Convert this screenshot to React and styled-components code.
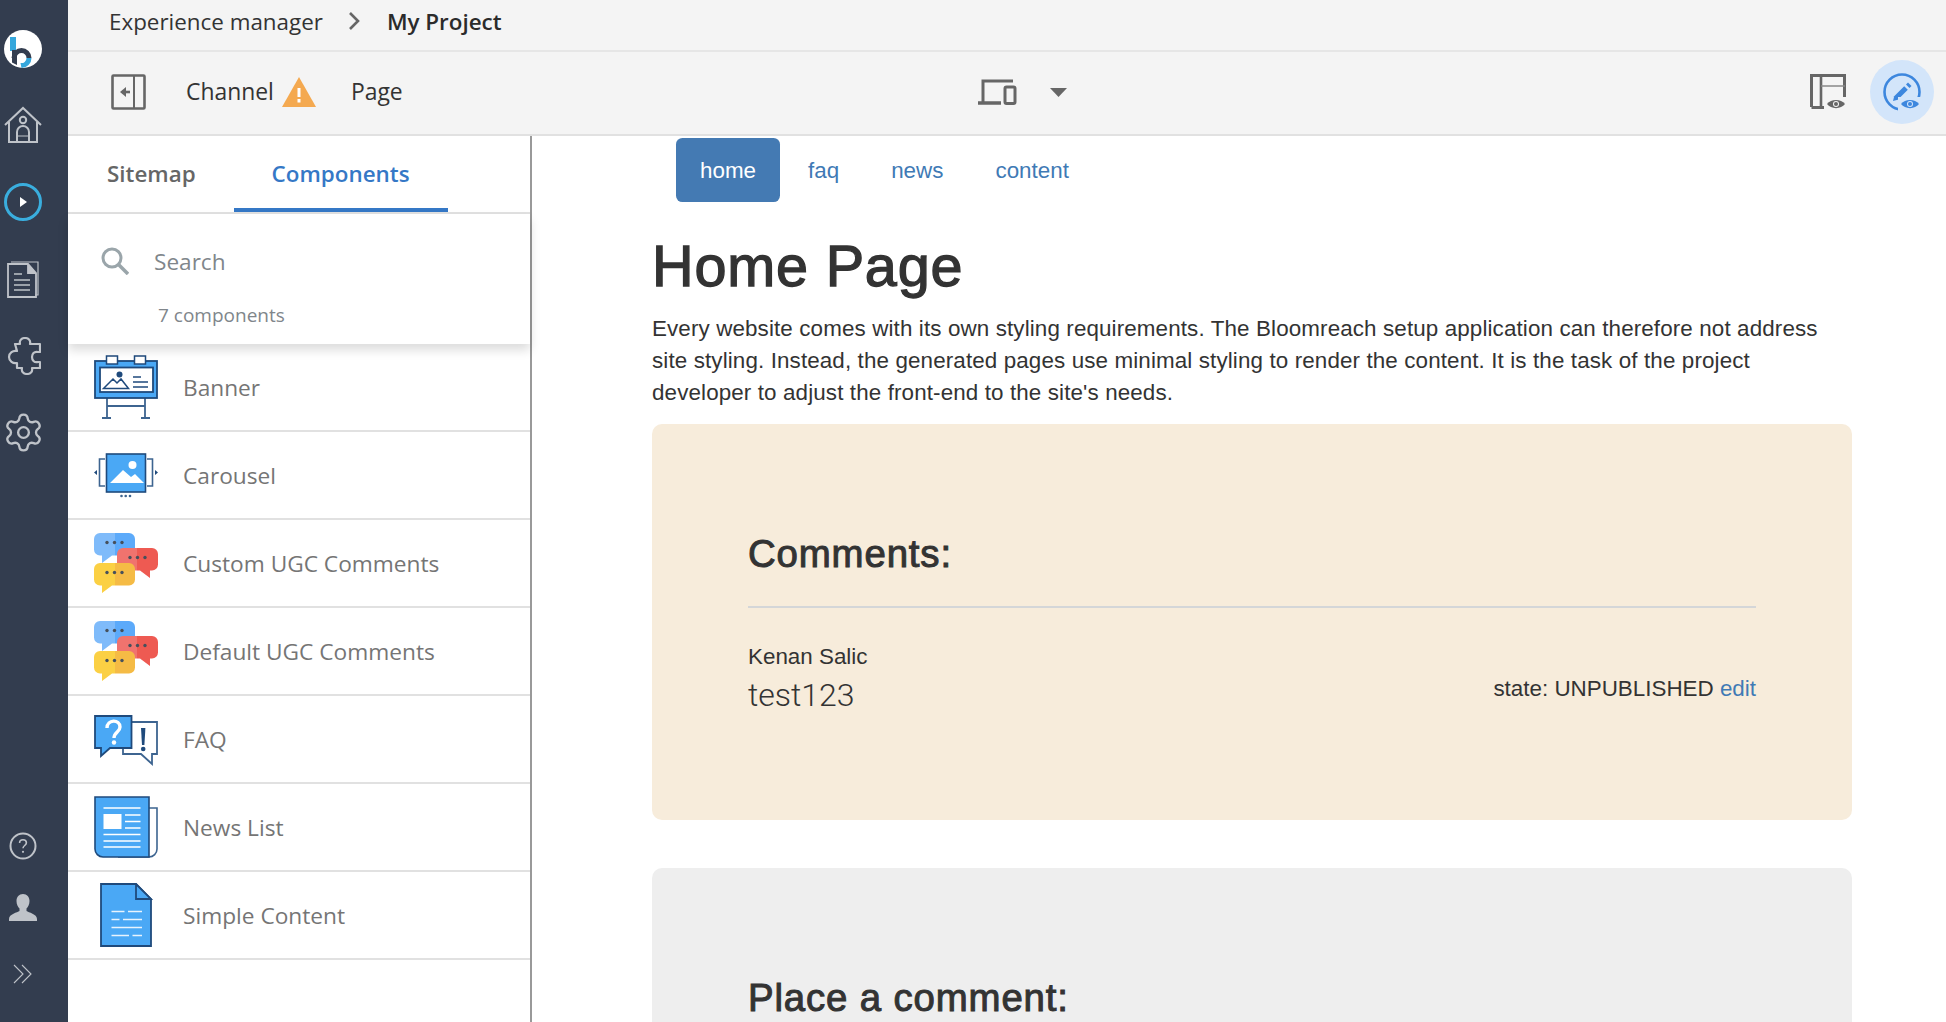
import React from 'react'
import styled, { createGlobalStyle } from 'styled-components'
import { Settings } from 'lucide-react'

const GlobalStyle = createGlobalStyle`
  html, body { margin: 0; padding: 0; height: 100%; overflow: hidden; background: #fff; }
  * { box-sizing: border-box; }
`

const Shell = styled.div`
  display: flex;
  width: 100vw;
  height: 100vh;
  overflow: hidden;
  font-family: "Open Sans", sans-serif;
`
const SideNav = styled.nav`
  flex: 0 0 68px;
  display: flex;
  flex-direction: column;
  background: #333d4f;
  padding: 30px 22px 38px 0;
`
const NavItem = styled.div`
  flex: 0 0 ${props => props.h || 77}px;
  display: flex;
  justify-content: center;
  align-items: center;
  margin-top: ${props => props.mt || 0}px;
`
const NavBottom = styled.div`
  margin-top: auto;
  display: flex;
  flex-direction: column;
`
const Main = styled.div`
  flex: 1;
  min-width: 0;
  display: flex;
  flex-direction: column;
`
const Crumbs = styled.div`
  flex: 0 0 52px;
  display: flex;
  align-items: center;
  padding: 0 0 8px 41px;
  background: #f4f4f4;
  border-bottom: 2px solid #e6e6e6;
  font-size: 22.4px;
  color: #333;
`
const CrumbSep = styled.svg`
  width: 13px;
  height: 18px;
  margin: 0 26px 0 25px;
`
const CrumbCurrent = styled.span`
  font-weight: 600;
  color: #2b2b2b;
`
const Toolbar = styled.div`
  flex: 0 0 84px;
  display: flex;
  align-items: center;
  padding: 0 12px 2px 0;
  background: #f4f4f4;
  border-bottom: 2px solid #e1e1e1;
  font-size: 22.9px;
  color: #333;
`
const ToolLeft = styled.div`
  flex: 0 0 910px;
  display: flex;
  align-items: center;
  padding-left: 43px;
`
const ChannelLabel = styled.span`
  margin: 0 8px 2px 40px;
`
const PageLabel = styled.span`
  margin: 0 0 2px 35px;
`
const ToolCenter = styled.div`
  display: flex;
  align-items: center;
  gap: 33px;
`
const ToolRight = styled.div`
  margin-left: auto;
  display: flex;
  align-items: center;
  gap: 24px;
`
const ModeButton = styled.div`
  width: 64px;
  height: 64px;
  border-radius: 50%;
  background: #d3e5fa;
  display: flex;
  align-items: center;
  justify-content: center;
`
const Body = styled.div`
  flex: 1;
  min-height: 0;
  display: flex;
`
const Panel = styled.aside`
  flex: 0 0 464px;
  display: flex;
  flex-direction: column;
  border-right: 2px solid #999;
  background: #fff;
`
const Tabs = styled.div`
  flex: 0 0 78px;
  display: flex;
  border-bottom: 2px solid #e1e1e1;
`
const Tab = styled.div`
  display: flex;
  align-items: center;
  padding: 2px 38px 0 ${props => props.active ? 38 : 39}px;
  font-size: 22.4px;
  font-weight: 600;
  color: ${props => props.active ? '#3578c6' : '#666'};
  border-bottom: 4px solid ${props => props.active ? '#3578c6' : 'transparent'};
`
const SearchBox = styled.div`
  flex: 0 0 130px;
  position: relative;
  z-index: 2;
  padding: 32px 0 0 33px;
  background: #fff;
  box-shadow: 0 6px 10px rgba(0, 0, 0, 0.14);
`
const SearchRow = styled.div`
  display: flex;
  align-items: center;
  gap: 25px;
  height: 30px;
  font-size: 22.6px;
  color: #80868b;
`
const SearchCount = styled.div`
  margin: 27px 0 0 57px;
  font-size: 19px;
  line-height: 24px;
  color: #80868b;
`
const Row = styled.div`
  flex: 0 0 88px;
  display: flex;
  align-items: center;
  gap: 25px;
  padding-left: 26px;
  border-bottom: 2px solid #e1e1e1;
  font-size: 22.7px;
  color: #757575;
`
const RowIcon = styled.svg`
  flex: 0 0 64px;
  width: 64px;
  height: 64px;
`
const Content = styled.main`
  flex: 1;
  min-width: 0;
  padding: 2px 0 0 120px;
  font-family: "Liberation Sans", Arial, sans-serif;
  font-size: 22.4px;
  line-height: 32px;
  color: #333;
`
const Inner = styled.div`
  width: 1200px;
`
const PageNav = styled.ul`
  list-style: none;
  display: flex;
  gap: 4px;
  margin: 0 0 0 24px;
  padding: 0;
`
const PageNavLink = styled.li`
  padding: 17px 24px 15px;
  border-radius: 6.4px;
  color: ${props => props.active ? '#fff' : '#3f7ab5'};
  background: ${props => props.active ? '#447ab3' : 'transparent'};
`
const Title = styled.h1`
  margin: 33px 0 15px;
  font-size: 57.6px;
  line-height: 63px;
  font-weight: 400;
  -webkit-text-stroke: 1.3px #333;
  letter-spacing: 0.8px;
`
const Intro = styled.p`
  margin: 0 0 15px;
  letter-spacing: 0.12px;
`
const Card = styled.section`
  min-height: ${props => props.h || 396}px;
  margin-bottom: 48px;
  padding: 109px 96px 0;
  border-radius: 10px;
  background: ${props => props.tone || '#eee'};
`
const CardTitle = styled.h3`
  margin: 0;
  font-size: 38.4px;
  line-height: 42px;
  font-weight: 400;
  -webkit-text-stroke: 1px #333;
  letter-spacing: 0.85px;
`
const Rule = styled.hr`
  margin: 31px 0 33px;
  border: 0;
  border-top: 2px solid #d4d6d8;
`
const Comment = styled.div`
  display: flex;
  justify-content: space-between;
  align-items: flex-end;
`
const CommentText = styled.div`
  font-family: Roboto, "Liberation Sans", sans-serif;
  font-weight: 300;
  font-size: 32px;
  line-height: 44px;
`
const CommentState = styled.div`
  padding-bottom: 12px;
`
const EditLink = styled.span`
  color: #3f7ab5;
`

const ic = '#bfc3c9'

const Logo = () => (
  <svg width="38" height="38" viewBox="0 0 38 38">
    <circle cx="19" cy="19" r="19" fill="#fff" />
    <path d="M6 7h6v14H6z" fill="#35a7dc" />
    <path d="M8 20h5v15l-5-2.500z" fill="#333d4f" />
    <path d="M7.500 28a10 10 0 0 1 20 0h-5a5 5 0 0 0-10 0z" fill="#333d4f" />
    <path d="M27.500 28a10 10 0 0 1-10 10l-1-5a5 5 0 0 0 6-5z" fill="#35a7dc" />
  </svg>
)
const HomeIcon = () => (
  <svg width="38" height="38" viewBox="0 0 38 38" fill="none" stroke={ic} strokeWidth="2">
    <path d="M1 19 19 2l18 17" />
    <path d="M5 16v20h28V16" />
    <circle cx="19" cy="14" r="3.200" />
    <path d="M13 36V26a6 6 0 0 1 12 0v10" />
    <path d="M13 30h12" strokeWidth="1" />
  </svg>
)
const PlayIcon = () => (
  <svg width="38" height="40" viewBox="0 0 38 40" fill="none">
    <circle cx="19" cy="20" r="17.500" stroke="#3aaede" strokeWidth="3" />
    <path d="M16 15v10l7-5z" fill="#fff" />
  </svg>
)
const DocsIcon = () => (
  <svg width="32" height="38" viewBox="0 0 32 38" fill="none" stroke={ic} strokeWidth="1.800">
    <path d="M4 2h27v33h-3" strokeWidth="1.200" />
    <path d="M1 4h20l8 9v24H1z" />
    <path d="M21 4v9h8" fill={ic} />
    <path d="M7 14h8M7 20h16M7 25h16M7 30h16" strokeWidth="1.400" />
  </svg>
)
const PuzzleIcon = () => (
  <svg width="36" height="38" viewBox="0 0 36 38" fill="none" stroke={ic} strokeWidth="2.200" strokeLinejoin="round">
    <path d="M10 7h5c-1-4 2-6 5-6s6 2 5 6h10v8h-2c-4-1-6 2-6 5s2 6 6 5h2v6h-8c1 4-2 6-5 6s-6-2-5-6h-5v-5c-4 1-8-2-8-6s4-7 8-6z" />
  </svg>
)
const HelpIcon = () => (
  <svg width="28" height="28" viewBox="0 0 28 28" fill="none">
    <circle cx="14" cy="14" r="12.500" stroke={ic} strokeWidth="2" />
    <path d="M10.600 11c0-2 1.500-3.200 3.400-3.200s3.400 1.200 3.400 3c0 2.600-3.400 2.800-3.400 5.400" stroke={ic} strokeWidth="1.600" />
    <circle cx="14" cy="19.800" r="1.100" fill={ic} />
  </svg>
)
const UserIcon = () => (
  <svg width="28" height="28" viewBox="0 0 28 28" fill={ic}>
    <path d="M14 1c4 0 6.500 3 6.500 7 0 3.500-1.500 6-3 7.500v2.500c2 1.500 10.500 3 10.500 8v2H0v-2c0-5 8.500-6.500 10.500-8v-2.500c-1.500-1.500-3-4-3-7.500 0-4 2.500-7 6.500-7z" />
  </svg>
)
const ExpandIcon = () => (
  <svg width="20" height="20" viewBox="0 0 20 20" fill="none" stroke={ic} strokeWidth="1.100">
    <path d="m1 1 9 9-9 9M9 1l9 9-9 9" />
  </svg>
)

const CollapseIcon = () => (
  <svg width="35" height="36" viewBox="0 0 35 36" fill="none">
    <rect x="1.500" y="1.500" width="32" height="33" rx="1" stroke="#666" strokeWidth="2.600" />
    <path d="M23 2v32" stroke="#666" strokeWidth="2" />
    <path d="M19 18h-8" stroke="#666" strokeWidth="2.600" />
    <path d="M15 13v10l-6-5z" fill="#666" />
  </svg>
)
const WarnIcon = () => (
  <svg width="34" height="30" viewBox="0 0 34 30">
    <path d="M17 0 34 30H0z" fill="#f4a950" />
    <path d="M15.500 11h3v9h-3zM15.500 22h3v3.500h-3z" fill="#fff" />
  </svg>
)
const DeviceIcon = () => (
  <svg width="39" height="26" viewBox="0 0 39 26" fill="none" stroke="#666">
    <path d="M5 23V2h30" strokeWidth="3" />
    <path d="M0 24h23" strokeWidth="3.500" />
    <rect x="27" y="8" width="10" height="16.500" rx="1.500" strokeWidth="3" />
  </svg>
)
const Caret = () => (
  <svg width="17" height="9" viewBox="0 0 17 9">
    <path d="M0 0h17l-8.500 9z" fill="#666" />
  </svg>
)
const EyeShape = ({ x, y, color, bg }) => (
  <g transform={`translate(${x} ${y})`}>
    <path d="M-3 -3h24v14H-3z" fill={bg} />
    <path d="M0 4c4-5.500 14-5.500 18 0-4 5.500-14 5.500-18 0z" fill={color} />
    <circle cx="9" cy="4" r="3" fill={bg} />
    <circle cx="9" cy="4" r="2" fill={color} />
  </g>
)
const LayoutEyeIcon = () => (
  <svg width="36" height="36" viewBox="0 0 36 36" fill="none">
    <path d="M1.500 33V1.500h33V24" stroke="#666" strokeWidth="3" />
    <path d="M1.500 33.500h13" stroke="#666" strokeWidth="3" />
    <path d="M11 2v31" stroke="#666" strokeWidth="2.600" />
    <path d="M11 12h24" stroke="#888" strokeWidth="1.500" />
    <EyeShape x={17} y={26} color="#666" bg="#f4f4f4" />
  </svg>
)
const EditEyeIcon = () => (
  <svg width="38" height="38" viewBox="0 0 38 38" fill="none">
    <circle cx="19" cy="19" r="17.500" stroke="#3d87de" strokeWidth="2.600" />
    <path d="M10 28l1.200-4.800 10-10 3.600 3.600-10 10z" fill="#3d87de" />
    <path d="m23 11.500 2-2 3.500 3.500-2 2z" fill="#3d87de" />
    <EyeShape x={18} y={27} color="#3d87de" bg="#d3e5fa" />
  </svg>
)
const SearchIcon = () => (
  <svg width="28" height="28" viewBox="0 0 28 28" fill="none" stroke="#9aa5aa">
    <circle cx="11" cy="11" r="9" strokeWidth="3" />
    <path d="m17.500 17.500 9.500 9.500" strokeWidth="3.500" />
  </svg>
)

const line = '#1f4a7c'
const fillBlue = '#4aa8f5'

const BannerArt = () => (
  <RowIcon viewBox="0 0 64 64" fill="none">
    <path d="M13 43v19M51 43v19M13 51h38M8 63h9M47 63h9" stroke="#3d6490" strokeWidth="1.800" />
    <rect x="1" y="6" width="62" height="37" fill={fillBlue} stroke={line} strokeWidth="1.800" />
    <rect x="6" y="12.500" width="53" height="24.500" fill="#fff" stroke={line} strokeWidth="1.800" />
    <rect x="12.500" y="1" width="11" height="8" fill="#fff" stroke={line} strokeWidth="1.500" />
    <rect x="40.500" y="1" width="11" height="8" fill="#fff" stroke={line} strokeWidth="1.500" />
    <circle cx="25.500" cy="19.500" r="3" fill={line} />
    <path d="M9.500 33.500 19 24l4 4 4-4 7.500 9.500zM11 33.500h22" stroke={line} strokeWidth="1.500" />
    <path d="M39 22h8M39 27h15M39 32h15" stroke={line} strokeWidth="1.500" />
  </RowIcon>
)
const CarouselArt = () => (
  <RowIcon viewBox="0 0 64 64" fill="none">
    <path d="M11 16H5.500v27H11M53 16h5.500v27H53" stroke="#3d6490" strokeWidth="1.600" />
    <rect x="12.500" y="11" width="39" height="38" fill={fillBlue} stroke={line} strokeWidth="1.600" />
    <circle cx="38.500" cy="22" r="4" fill="#fff" />
    <path d="M16 40 29 27l8 7 4-3 9 9z" fill="#fff" />
    <path d="M3 27v5l-3-2.500zM61 27v5l3-2.500z" fill={line} />
    <circle cx="27.500" cy="53" r="1.300" fill="#3d6490" />
    <circle cx="31.700" cy="53" r="1.300" fill="#3d6490" />
    <circle cx="36" cy="53" r="1.300" fill="#3d6490" />
  </RowIcon>
)
const Bubble = ({ x, y, tail, left, right, clip }) => (
  <g transform={`translate(${x} ${y})`}>
    <clipPath id={clip}>
      <path d={`M6 0h29a6 6 0 0 1 6 6v10.500a6 6 0 0 1-6 6H${tail + 10}L${tail} 30v-7.500H6a6 6 0 0 1-6-6V6a6 6 0 0 1 6-6z`} />
    </clipPath>
    <g clipPath={`url(#${clip})`}>
      <rect width="21" height="32" fill={left} />
      <rect x="21" width="21" height="32" fill={right} />
    </g>
    <circle cx="13" cy="9.500" r="1.700" fill="#46505c" />
    <circle cx="20.500" cy="9.500" r="1.700" fill="#46505c" />
    <circle cx="28" cy="9.500" r="1.700" fill="#46505c" />
  </g>
)
const ChatArt = ({ id }) => (
  <RowIcon viewBox="0 0 64 64" fill="none">
    <Bubble x={0} y={2} tail={8} left="#7fbbfa" right="#5caafa" clip={`${id}a`} />
    <g transform="translate(64 17) scale(-1 1)">
      <Bubble x={0} y={0} tail={8} left="#ee5a52" right="#f0736e" clip={`${id}b`} />
    </g>
    <Bubble x={0} y={32} tail={8} left="#fbd044" right="#f5bb45" clip={`${id}c`} />
  </RowIcon>
)
const FaqArt = () => (
  <RowIcon viewBox="0 0 64 64" fill="none">
    <path d="M38 15h25v32h-5v10l-11-10H29v-6" fill="#fff" stroke="#3d6490" strokeWidth="1.800" />
    <path d="M1 9h36.500v32H16L7 49v-8H1z" fill={fillBlue} stroke={line} strokeWidth="1.800" />
    <path d="M13 21c0-9 13-9 13-1 0 5-6 5-6 11" stroke="#fff" strokeWidth="3.400" />
    <circle cx="20" cy="35.500" r="2.200" fill="#fff" />
    <path d="M47 21h4.400l-1 17h-2.400z" fill={line} />
    <circle cx="49.200" cy="42" r="2.300" fill={line} />
  </RowIcon>
)
const NewsArt = () => (
  <RowIcon viewBox="0 0 64 64" fill="none">
    <path d="M55 13h8v41a8 8 0 0 1-8 8H24" stroke="#3d6490" strokeWidth="1.600" fill="#fff" />
    <path d="M1 2h54v60H9a8 8 0 0 1-8-8z" fill={fillBlue} stroke={line} strokeWidth="1.600" />
    <rect x="9.500" y="19" width="18" height="15" fill="#fff" />
    <path d="M9.500 13h37M31 20h15.500M31 26.500h15.500M31 33h15.500M9.500 39.500h37M9.500 46h37M9.500 52h37" stroke="#fff" strokeWidth="1.600" />
  </RowIcon>
)
const ContentArt = () => (
  <RowIcon viewBox="0 0 64 64" fill="none">
    <path d="M7 1h35l15 15v47H7z" fill={fillBlue} stroke={line} strokeWidth="1.800" />
    <path d="M42 1v15h15z" fill={fillBlue} stroke={line} strokeWidth="1.800" />
    <path d="M17.500 28.500h13M34 28.500h14M17.500 36.500h8M29 36.500h19M17.500 44.500h30.500M17.500 52.500h17.500M38.500 52.500h9.500" stroke="#e8f3fd" strokeWidth="1.600" />
  </RowIcon>
)

const components = [
  { name: 'Banner', art: <BannerArt /> },
  { name: 'Carousel', art: <CarouselArt /> },
  { name: 'Custom UGC Comments', art: <ChatArt id="c1" /> },
  { name: 'Default UGC Comments', art: <ChatArt id="c2" /> },
  { name: 'FAQ', art: <FaqArt /> },
  { name: 'News List', art: <NewsArt /> },
  { name: 'Simple Content', art: <ContentArt /> },
]

const App = () => (
  <Shell>
    <GlobalStyle />
    <SideNav>
      <NavItem h={38}><Logo /></NavItem>
      <NavItem mt={18}><HomeIcon /></NavItem>
      <NavItem><PlayIcon /></NavItem>
      <NavItem><DocsIcon /></NavItem>
      <NavItem><PuzzleIcon /></NavItem>
      <NavItem><Settings size={43} strokeWidth={1.3} color={ic} /></NavItem>
      <NavBottom>
        <NavItem h={28}><HelpIcon /></NavItem>
        <NavItem h={28} mt={33}><UserIcon /></NavItem>
        <NavItem h={20} mt={43}><ExpandIcon /></NavItem>
      </NavBottom>
    </SideNav>
    <Main>
      <Crumbs>
        Experience manager
        <CrumbSep viewBox="0 0 13 18" fill="none" stroke="#666" strokeWidth="2.600"><path d="m2 1 8 8-8 8" /></CrumbSep>
        <CrumbCurrent>My Project</CrumbCurrent>
      </Crumbs>
      <Toolbar>
        <ToolLeft>
          <CollapseIcon />
          <ChannelLabel>Channel</ChannelLabel>
          <WarnIcon />
          <PageLabel>Page</PageLabel>
        </ToolLeft>
        <ToolCenter>
          <DeviceIcon />
          <Caret />
        </ToolCenter>
        <ToolRight>
          <LayoutEyeIcon />
          <ModeButton><EditEyeIcon /></ModeButton>
        </ToolRight>
      </Toolbar>
      <Body>
        <Panel>
          <Tabs>
            <Tab>Sitemap</Tab>
            <Tab active>Components</Tab>
          </Tabs>
          <SearchBox>
            <SearchRow><SearchIcon />Search</SearchRow>
            <SearchCount>7 components</SearchCount>
          </SearchBox>
          {components.map(c => (
            <Row key={c.name}>{c.art}{c.name}</Row>
          ))}
        </Panel>
        <Content>
          <Inner>
            <PageNav>
              <PageNavLink active>home</PageNavLink>
              <PageNavLink>faq</PageNavLink>
              <PageNavLink>news</PageNavLink>
              <PageNavLink>content</PageNavLink>
            </PageNav>
            <Title>Home Page</Title>
            <Intro>
              Every website comes with its own styling requirements. The Bloomreach setup application can therefore not address site styling. Instead, the generated pages use minimal styling to render the content. It is the task of the project developer to adjust the front-end to the site's needs.
            </Intro>
            <Card tone="#f7ecdb">
              <CardTitle>Comments:</CardTitle>
              <Rule />
              <Comment>
                <div>
                  Kenan Salic
                  <CommentText>test123</CommentText>
                </div>
                <CommentState>state: UNPUBLISHED <EditLink>edit</EditLink></CommentState>
              </Comment>
            </Card>
            <Card>
              <CardTitle>Place a comment:</CardTitle>
            </Card>
          </Inner>
        </Content>
      </Body>
    </Main>
  </Shell>
)

export default App
